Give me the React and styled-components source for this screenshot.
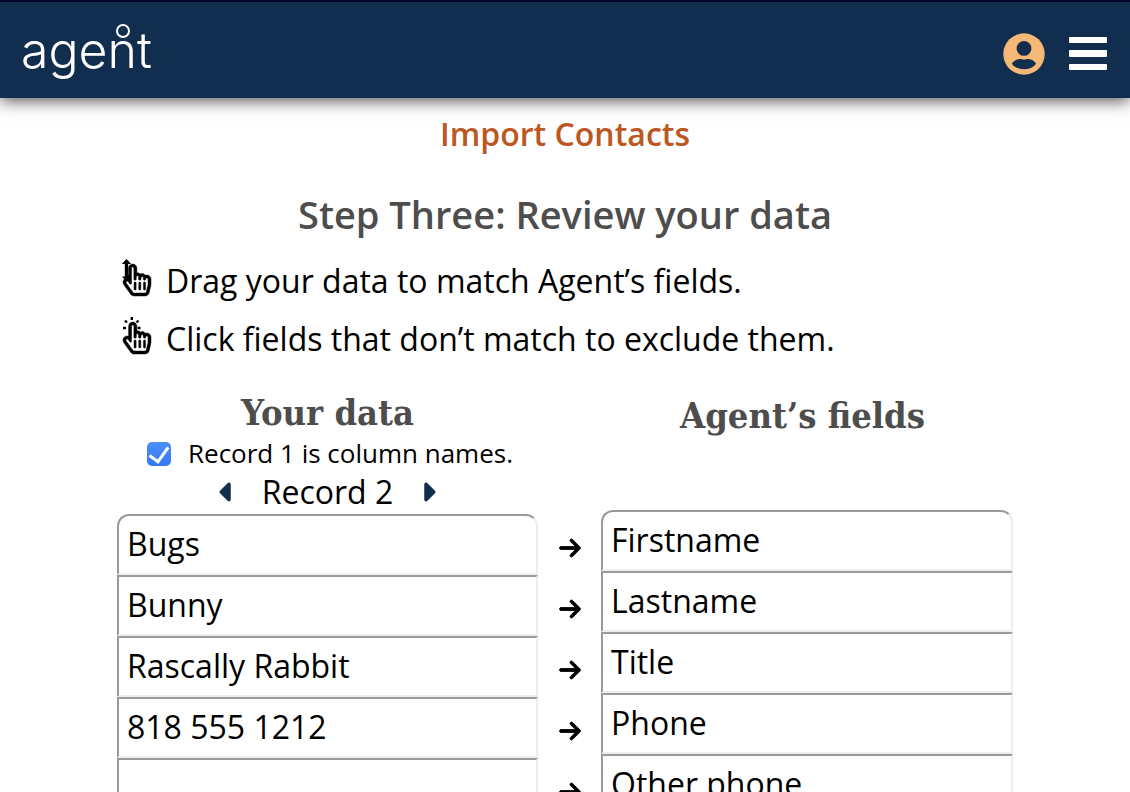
import React, { useState } from "react";
import styled, { createGlobalStyle } from "styled-components";
import { FaRegHandPointer } from "react-icons/fa";
import { FaArrowRight, FaCaretLeft, FaCaretRight } from "react-icons/fa6";

const GlobalStyle = createGlobalStyle`
  * { box-sizing: border-box; }
  html { scrollbar-width: none; }
  body {
    margin: 0;
    background: #fff;
    color: #000;
    font-family: "Open Sans", "Noto Sans", sans-serif;
    font-size: 32px;
    line-height: 44px;
  }
  button { font: inherit; color: inherit; background: none; border: 0; padding: 0; cursor: pointer; }
`;

const Header = styled.header`
  display: flex;
  align-items: center;
  justify-content: space-between;
  height: 98px;
  padding: 7px 23px 0 21px;
  background: #112e4e;
  border-top: 2px solid #00082c;
  box-shadow: 0 2px 16px rgba(0, 0, 0, 0.75);
`;

const Logo = styled.a`
  position: relative;
  padding-bottom: 8px;
  color: #fff;
  font-family: Inter, sans-serif;
  font-size: 50px;
  font-weight: 300;
  line-height: 60px;
  text-decoration: none;
`;

const Ring = styled.span`
  position: absolute;
  top: 4px;
  right: 22px;
  width: 14px;
  height: 14px;
  border: 2px solid #fff;
  border-radius: 50%;
`;

const HeaderActions = styled.nav`
  display: flex;
  align-items: center;
  gap: 24px;
`;

const IconButton = styled.button`
  display: flex;
`;

const Main = styled.main`
  padding: 14px 117px 0;
`;

const PageTitle = styled.h1`
  margin: 0;
  color: #bc5722;
  font-size: 32px;
  font-weight: 600;
  line-height: 44px;
  text-align: center;
`;

const StepTitle = styled.h2`
  margin: 32px 0 0;
  color: #4d4d4d;
  font-size: 38px;
  font-weight: 600;
  line-height: 52px;
  text-align: center;
`;

const Tips = styled.ul`
  margin: 12px 0 0;
  padding: 0 0 0 4px;
  list-style: none;
`;

const Tip = styled.li`
  display: flex;
  align-items: center;
  gap: 12px;
  height: 58px;
`;

const TipIcon = styled.svg`
  flex: none;
  width: 33px;
  height: 44px;
`;

const Columns = styled.div`
  display: grid;
  grid-template-columns: minmax(0, 421fr) 63px minmax(0, 412fr);
  align-items: start;
  margin-top: 20px;
`;

const Column = styled.section`
  padding-top: ${(p) => p.$top || 0}px;
`;

const ColumnTitle = styled.h3`
  margin: 0;
  padding-right: ${(p) => p.$inset || 0}px;
  color: #4d4d4d;
  font-family: "DejaVu Serif Condensed", "DejaVu Serif", serif;
  font-size: 36px;
  font-weight: 700;
  line-height: 48px;
  text-align: center;
`;

const HeaderRow = styled.label`
  display: flex;
  align-items: center;
  gap: 17px;
  height: 34px;
  padding-left: 30px;
  font-size: 26px;
  white-space: nowrap;
`;

const Checkbox = styled.input`
  appearance: none;
  flex: none;
  width: 24px;
  height: 24px;
  margin: 2px 0 0;
  border-radius: 5px;
  background: linear-gradient(#4a90fa, #3478f6);
  display: grid;
  place-items: center;
  &::before {
    content: "";
    width: 9px;
    height: 16px;
    margin-bottom: 4px;
    border: solid #fff;
    border-width: 0 3px 3px 0;
    transform: rotate(36deg);
    opacity: 0;
  }
  &:checked::before { opacity: 1; }
`;

const Pager = styled.div`
  display: flex;
  align-items: center;
  justify-content: center;
  gap: 20px;
  height: 44px;
`;

const PagerButton = styled.button`
  display: flex;
  color: #112e4e;
`;

const FieldList = styled.ul`
  margin: ${(p) => p.$top || 0}px 0 0;
  padding: 0;
  list-style: none;
`;

const Cell = styled.li`
  height: 61px;
  padding: 6px 8px;
  border: 2px solid;
  border-color: #9a9a9a #eee #eee #9a9a9a;
  &:first-child { border-radius: 12px 12px 0 0; }
`;

const ValueButton = styled.button`
  display: block;
  width: 100%;
  height: 44px;
  text-align: left;
`;

const Arrows = styled.div`
  display: grid;
  justify-items: center;
  grid-auto-rows: 61px;
  align-items: center;
  padding-top: 129px;
`;

const ROWS = [
  ["Bugs", "Firstname"],
  ["Bunny", "Lastname"],
  ["Rascally Rabbit", "Title"],
  ["818 555 1212", "Phone"],
  ["", "Other phone"],
];

function DragIcon() {
  return (
    <TipIcon viewBox="0 0 33 44" aria-hidden="true">
      <FaRegHandPointer x="0" y="5" size={32} stroke="#000" strokeWidth="7" overflow="visible" />
      <path d="M5.500 0 L10.200 5 H7.200 V16 H10 V19 L5.500 23 L1 17.500 H3.800 V5 H0.800 Z" />
    </TipIcon>
  );
}

function ClickIcon() {
  return (
    <TipIcon viewBox="0 0 33 44" aria-hidden="true">
      <FaRegHandPointer x="0" y="5" size={32} stroke="#000" strokeWidth="7" overflow="visible" />
      <path
        d="M10.800 0 V3 M4 3.500 L6 5.500 M17.500 3.500 L15.500 5.500 M2 11 H5 M16.500 11 H19.500"
        fill="none"
        stroke="#000"
        strokeWidth="2.400"
      />
    </TipIcon>
  );
}

export default function App() {
  const [hasNames, setHasNames] = useState(true);
  return (
    <>
      <GlobalStyle />
      <Header>
        <Logo href="#">
          agent
          <Ring />
        </Logo>
        <HeaderActions>
          <IconButton aria-label="Account">
            <svg width="42" height="42" viewBox="0 0 42 42">
              <circle cx="21" cy="21" r="20.7" fill="#f6b876" />
              <circle cx="21" cy="15.4" r="7.4" fill="#112e4e" />
              <path
                d="M8.800 30.800 C11.500 26.500 15.500 25.600 18 26 Q21 27.200 24 26 C26.500 25.600 30.500 26.500 33.200 30.800 C27.500 38.200 14.500 38.200 8.800 30.800 Z"
                fill="#112e4e"
              />
            </svg>
          </IconButton>
          <IconButton aria-label="Menu">
            <svg width="38" height="34" viewBox="0 0 38 34" fill="#fff">
              <rect y="0" width="38" height="6" rx="1" />
              <rect y="13" width="38" height="7" rx="1" />
              <rect y="27" width="38" height="6" rx="1" />
            </svg>
          </IconButton>
        </HeaderActions>
      </Header>
      <Main>
        <PageTitle>Import Contacts</PageTitle>
        <StepTitle>Step Three: Review your data</StepTitle>
        <Tips>
          <Tip>
            <DragIcon />
            Drag your data to match Agent’s fields.
          </Tip>
          <Tip>
            <ClickIcon />
            Click fields that don’t match to exclude them.
          </Tip>
        </Tips>
        <Columns>
          <Column>
            <ColumnTitle>Your data</ColumnTitle>
            <HeaderRow>
              <Checkbox
                type="checkbox"
                checked={hasNames}
                onChange={(e) => setHasNames(e.target.checked)}
              />
              Record 1 is column names.
            </HeaderRow>
            <Pager>
              <PagerButton aria-label="Previous record">
                <FaCaretLeft size={30} viewBox="0 0 256 512" />
              </PagerButton>
              Record 2
              <PagerButton aria-label="Next record">
                <FaCaretRight size={30} viewBox="0 0 256 512" />
              </PagerButton>
            </Pager>
            <FieldList>
              {ROWS.map(([value, field]) => (
                <Cell key={field}>
                  <ValueButton aria-label={value ? undefined : "Empty field"}>{value}</ValueButton>
                </Cell>
              ))}
            </FieldList>
          </Column>
          <Arrows>
            {ROWS.map(([, field]) => (
              <FaArrowRight key={field} size={24} stroke="currentColor" strokeWidth="18" />
            ))}
          </Arrows>
          <Column $top={3}>
            <ColumnTitle $inset={9}>Agent’s fields</ColumnTitle>
            <FieldList $top={71}>
              {ROWS.map(([, field]) => (
                <Cell key={field}>{field}</Cell>
              ))}
            </FieldList>
          </Column>
        </Columns>
      </Main>
    </>
  );
}
